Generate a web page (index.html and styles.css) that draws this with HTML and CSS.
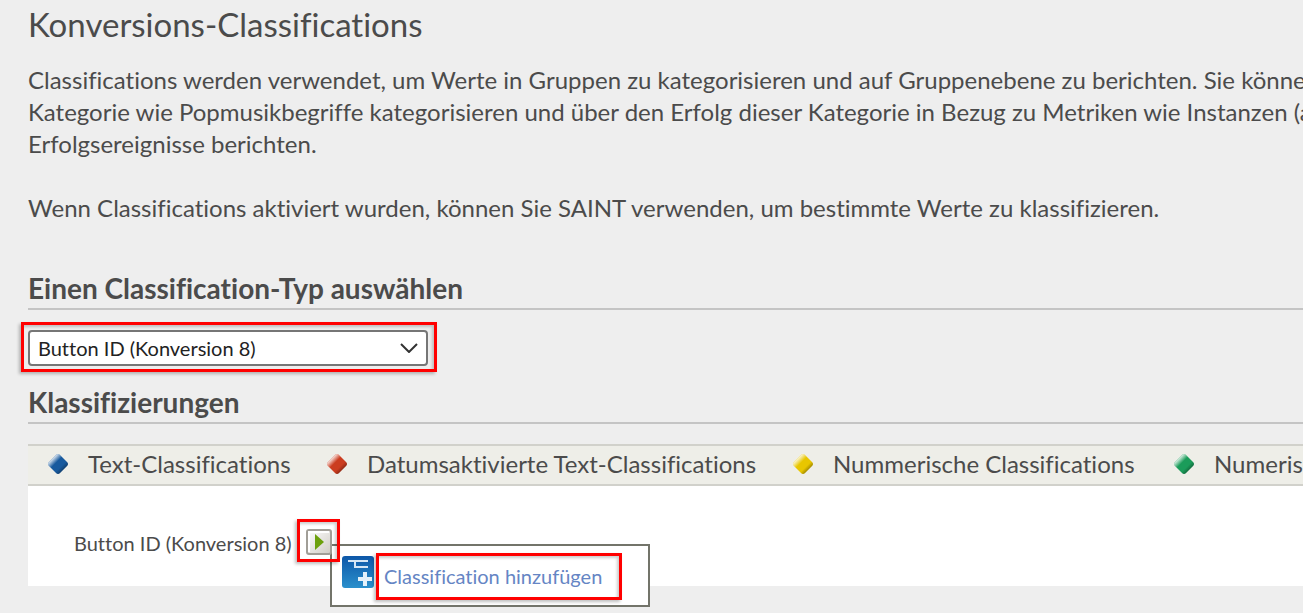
FILE: index.html
```html
<!DOCTYPE html>
<html lang="de">
<head>
<meta charset="utf-8">
<meta name="viewport" content="width=device-width, initial-scale=1">
<title>Konversions-Classifications</title>
<link rel="stylesheet" href="styles.css">
</head>
<body>
<svg width="0" height="0" class="defs" aria-hidden="true">
  <defs>
    <linearGradient id="shine" x1="0" y1="0" x2="1" y2="1">
      <stop offset="0.22" stop-color="#fff" stop-opacity="0.85"/>
      <stop offset="0.42" stop-color="#fff" stop-opacity="0"/>
      <stop offset="0.64" stop-color="#000" stop-opacity="0"/>
      <stop offset="0.78" stop-color="#000" stop-opacity="0.3"/>
    </linearGradient>
    <linearGradient id="key" x1="0" y1="0" x2="1" y2="1">
      <stop offset="0" stop-color="#fff"/>
      <stop offset="1" stop-color="#cfcbc4"/>
    </linearGradient>
    <linearGradient id="tile" x1="0" y1="0" x2="0" y2="1">
      <stop offset="0" stop-color="#0d57a8"/>
      <stop offset="1" stop-color="#2b90cc"/>
    </linearGradient>
    <symbol id="diamond" viewBox="0 0 20 20">
      <path d="M8 1Q10 -1 12 1L19 8Q21 10 19 12L12 19Q10 21 8 19L1 12Q-1 10 1 8Z" fill="currentColor"/>
      <path d="M8 1Q10 -1 12 1L19 8Q21 10 19 12L12 19Q10 21 8 19L1 12Q-1 10 1 8Z" fill="url(#shine)"/>
    </symbol>
  </defs>
</svg>
<main class="page">
  <h1 class="title">Konversions-Classifications</h1>
  <p class="intro">Classifications werden verwendet, um Werte in Gruppen zu kategorisieren und auf Gruppenebene zu berichten. Sie könne<br>Kategorie wie Popmusikbegriffe kategorisieren und über den Erfolg dieser Kategorie in Bezug zu Metriken wie Instanzen (a<br>Erfolgsereignisse berichten.</p>
  <p class="intro">Wenn Classifications aktiviert wurden, können Sie SAINT verwenden, um bestimmte Werte zu klassifizieren.</p>

  <h2 class="section"><label for="type">Einen Classification-Typ auswählen</label></h2>
  <div class="mark mark-select">
    <select id="type" class="select"><option>Button ID (Konversion 8)</option></select>
    <svg class="chevron" viewBox="0 0 18 10" aria-hidden="true"><path d="M1 1L9 9L17 1"/></svg>
  </div>

  <h2 class="section">Klassifizierungen</h2>
  <ul class="legend">
    <li class="key blue"><svg class="gem" aria-hidden="true"><use href="#diamond"/></svg>Text-Classifications</li>
    <li class="key red"><svg class="gem" aria-hidden="true"><use href="#diamond"/></svg>Datumsaktivierte Text-Classifications</li>
    <li class="key yellow"><svg class="gem" aria-hidden="true"><use href="#diamond"/></svg>Nummerische Classifications</li>
    <li class="key green"><svg class="gem" aria-hidden="true"><use href="#diamond"/></svg>Numeris</li>
  </ul>
  <div class="panel">
    <span class="name">Button ID (Konversion 8)</span>
    <div class="anchor">
      <div class="mark mark-play">
        <button class="play" type="button" aria-label="Menü öffnen">
          <svg viewBox="0 0 26 26" aria-hidden="true">
            <rect x="1" y="1" width="24" height="24" rx="2" fill="url(#key)" stroke="#a19e97" stroke-width="2"/>
            <path d="M3 23V3H23" fill="none" stroke="#fff" stroke-width="2"/>
            <path d="M9 5L18 13L9 21Z" fill="#6ca00c"/>
          </svg>
        </button>
      </div>
      <div class="menu">
        <svg class="tile" viewBox="0 0 32 32" aria-hidden="true">
          <rect width="32" height="32" rx="3" fill="url(#tile)"/>
          <path d="M6 5H26M13 5V11H26" fill="none" stroke="#d5e6f5" stroke-width="2"/>
          <path d="M23 16V30M16 23H30" fill="none" stroke="#e4f1fa" stroke-width="4"/>
        </svg>
        <div class="mark mark-link"><a class="add" href="#">Classification hinzufügen</a></div>
      </div>
    </div>
  </div>
</main>
</body>
</html>
```
FILE: styles.css
```css
* { box-sizing: border-box; }
body {
  margin: 0;
  min-height: 100vh;
  background: #eee;
  color: #4b4b4b;
  font-family: Lato, "Noto Sans", sans-serif;
  font-size: 24px;
  font-variant-ligatures: none;
  line-height: 32px;
  overflow: hidden;
}
.defs { position: absolute; }
.page { padding: 3px 0 0 28px; }
.title { margin: 0 0 19px; font-size: 33px; line-height: 42px; font-weight: 400; }
.intro { margin: 0 0 32px; white-space: nowrap; }
.section {
  margin: 0;
  padding-bottom: 2px;
  border-bottom: 2px solid #c4c4c4;
  font-size: 28px;
  line-height: 36px;
  font-weight: 700;
}
.intro + .section { margin-top: 46px; }
.mark {
  border: 3px solid #f00;
  box-shadow: -2px 2px 3px rgba(0, 0, 0, .25), inset -2px 2px 3px rgba(0, 0, 0, .2);
}
.mark-select {
  position: relative;
  width: 416px;
  margin: 12px 0 12px -7px;
  padding: 5px 6px 3px 4px;
}
.select {
  display: block;
  width: 100%;
  height: 36px;
  padding: 0 8px;
  appearance: none;
  border: 2px solid #767676;
  border-radius: 4px;
  background: #fff;
  color: #222;
  font: inherit;
  font-size: 20px;
}
.chevron {
  position: absolute;
  right: 16px;
  top: 18px;
  width: 18px;
  height: 10px;
  fill: none;
  stroke: #333;
  stroke-width: 2;
  pointer-events: none;
}
.legend {
  display: grid;
  grid-template-columns: 279px 466px 381px auto;
  margin: 20px 0 0;
  padding: 2px 0 4px 20px;
  border: solid #d1d1cb;
  border-width: 2px 0;
  background: #eeeee8;
  list-style: none;
}
.key { display: flex; align-items: center; gap: 20px; white-space: nowrap; }
.gem { flex: none; width: 20px; height: 20px; }
.blue .gem { color: #185a9e; }
.red .gem { color: #cb3d20; }
.yellow .gem { color: #e8c600; }
.green .gem { color: #1b9c5a; }
.panel {
  display: flex;
  align-items: center;
  height: 100px;
  padding: 14px 0 0 46px;
  background: #fff;
  font-size: 20px;
}
.name { width: 223px; white-space: nowrap; }
.anchor { position: relative; margin-bottom: 6px; }
.mark-play { position: relative; z-index: 1; width: 43px; padding: 7px 5px 4px 6px; }
.play { display: block; width: 26px; height: 26px; padding: 0; border: 0; background: none; }
.play svg { display: block; width: 26px; height: 26px; }
.menu {
  position: absolute;
  top: 25px;
  left: 33px;
  display: flex;
  gap: 2px;
  width: 320px;
  padding: 7px 10px 5px;
  border: 2px solid #73746a;
  background: #fff;
}
.tile { flex: none; width: 32px; height: 32px; margin-top: 3px; }
.mark-link { width: 246px; padding: 4px 5px 5px; }
.add { display: block; color: #6585c4; text-decoration: none; white-space: nowrap; }
```
